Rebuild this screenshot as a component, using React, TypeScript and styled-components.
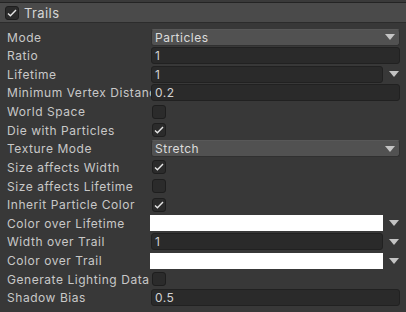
import React from "react";
import styled, { createGlobalStyle } from "styled-components";

const GlobalStyle = createGlobalStyle`
  html, body { margin: 0; padding: 0; background: #383838; }
  body { font-family: Inter, "Noto Sans", sans-serif; -webkit-font-smoothing: antialiased; }
`;

const Panel = styled.div`
  width: 406px;
  height: 312px;
  overflow: hidden;
  background: #383838;
  display: flex;
  flex-direction: column;
`;

const TopStrip = styled.div`
  height: 2px;
  background: #3a3a3a;
  border-bottom: 1px solid #242424;
  flex: none;
`;

const Header = styled.div`
  height: 19px;
  flex: none;
  display: flex;
  align-items: center;
  gap: 5px;
  padding-left: 5px;
  background: #4a4a4a;
  border-bottom: 1px solid #2c2c2c;
  color: #d6d6d6;
  font-size: 13px;
  letter-spacing: 0.4px;
`;

const Body = styled.div`
  padding-top: 4.7px;
  display: flex;
  flex-direction: column;
`;

const Row = styled.div`
  height: 18.64px;
  display: grid;
  grid-template-columns: 144px 1fr;
  align-items: center;
  padding-left: 7px;
  padding-right: 6px;
`;

const Label = styled.div`
  font-size: 12px;
  color: #c8c8c8;
  white-space: nowrap;
  overflow: hidden;
  letter-spacing: 0.55px;
`;

const FieldCell = styled.div`
  display: flex;
  align-items: center;
  gap: 4px;
  min-width: 0;
`;

const TextField = styled.div`
  flex: 1;
  height: 17px;
  box-sizing: border-box;
  background: #2a2a2a;
  border: 1px solid #212121;
  border-radius: 3px;
  color: #d2d2d2;
  font-size: 12px;
  line-height: 15px;
  padding-left: 3px;
  letter-spacing: 0.5px;
`;

const Dropdown = styled.div`
  flex: 1;
  height: 17px;
  box-sizing: border-box;
  background: #515151;
  border: 1px solid #303030;
  border-top-color: #585858;
  border-radius: 3px;
  color: #dcdcdc;
  font-size: 12px;
  line-height: 15px;
  padding-left: 3px;
  padding-right: 4px;
  letter-spacing: 0.5px;
  display: flex;
  align-items: center;
  justify-content: space-between;
`;

const ColorSwatch = styled.div`
  flex: 1;
  height: 16px;
  background: #ffffff;
  margin-left: -1px;
`;

const ArrowSlot = styled.div`
  width: 13px;
  flex: none;
  display: flex;
  justify-content: center;
`;

const Box = styled.div<{ $size: number }>`
  width: ${(p) => p.$size}px;
  height: ${(p) => p.$size}px;
  box-sizing: border-box;
  background: #2b2b2b;
  border: 1px solid #1e1e1e;
  border-radius: 3px;
  display: flex;
  align-items: center;
  justify-content: center;
  flex: none;
`;

const CheckCell = styled.div`
  display: flex;
  align-items: center;
  padding-left: 1px;
`;

const Arrow = () => (
  <svg width="10" height="6" viewBox="0 0 10 6">
    <path d="M0 0 H10 L5 6 Z" fill="#c4c4c4" />
  </svg>
);

const Check = () => (
  <svg width="10" height="8" viewBox="0 0 10 8">
    <path d="M1 4.6 L3.4 6.8 L9 1" fill="none" stroke="#e6e6e6" strokeWidth="1.4" />
  </svg>
);

const CheckBox = ({ checked, size = 14 }: { checked: boolean; size?: number }) => (
  <Box $size={size}>{checked ? <Check /> : null}</Box>
);

type Kind =
  | { t: "dropdown"; v: string }
  | { t: "text"; v: string }
  | { t: "curve"; v: string }
  | { t: "color" }
  | { t: "check"; v: boolean };

const rows: { label: string; k: Kind }[] = [
  { label: "Mode", k: { t: "dropdown", v: "Particles" } },
  { label: "Ratio", k: { t: "text", v: "1" } },
  { label: "Lifetime", k: { t: "curve", v: "1" } },
  { label: "Minimum Vertex Distance", k: { t: "text", v: "0.2" } },
  { label: "World Space", k: { t: "check", v: false } },
  { label: "Die with Particles", k: { t: "check", v: true } },
  { label: "Texture Mode", k: { t: "dropdown", v: "Stretch" } },
  { label: "Size affects Width", k: { t: "check", v: true } },
  { label: "Size affects Lifetime", k: { t: "check", v: false } },
  { label: "Inherit Particle Color", k: { t: "check", v: true } },
  { label: "Color over Lifetime", k: { t: "color" } },
  { label: "Width over Trail", k: { t: "curve", v: "1" } },
  { label: "Color over Trail", k: { t: "color" } },
  { label: "Generate Lighting Data", k: { t: "check", v: false } },
  { label: "Shadow Bias", k: { t: "text", v: "0.5" } },
];

const Field = ({ k }: { k: Kind }) => {
  switch (k.t) {
    case "dropdown":
      return (
        <FieldCell>
          <Dropdown>
            <span>{k.v}</span>
            <Arrow />
          </Dropdown>
        </FieldCell>
      );
    case "text":
      return (
        <FieldCell>
          <TextField>{k.v}</TextField>
        </FieldCell>
      );
    case "curve":
      return (
        <FieldCell>
          <TextField>{k.v}</TextField>
          <ArrowSlot>
            <Arrow />
          </ArrowSlot>
        </FieldCell>
      );
    case "color":
      return (
        <FieldCell>
          <ColorSwatch />
          <ArrowSlot>
            <Arrow />
          </ArrowSlot>
        </FieldCell>
      );
    case "check":
      return (
        <CheckCell>
          <CheckBox checked={k.v} />
        </CheckCell>
      );
  }
};

export default function App() {
  return (
    <>
      <GlobalStyle />
      <Panel>
        <TopStrip />
        <Header>
          <CheckBox checked size={14} />
          <span>Trails</span>
        </Header>
        <Body>
          {rows.map((r) => (
            <Row key={r.label}>
              <Label>{r.label}</Label>
              <Field k={r.k} />
            </Row>
          ))}
        </Body>
      </Panel>
    </>
  );
}
